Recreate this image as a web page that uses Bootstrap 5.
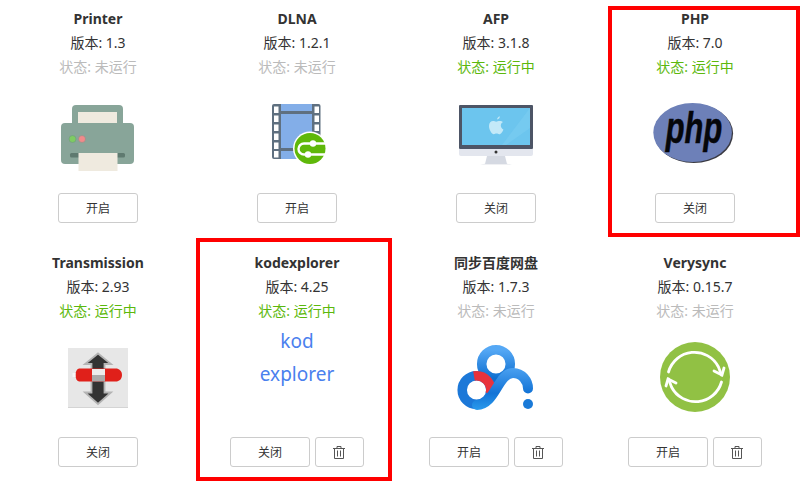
<!DOCTYPE html>
<html lang="zh-CN">
<head>
<meta charset="utf-8">
<title>插件</title>
<link href="https://cdn.jsdelivr.net/npm/bootstrap@5.3.0/dist/css/bootstrap.min.css" rel="stylesheet">
<style>
html,body{height:481px;overflow:hidden;background:#fff}
body{font-family:"Noto Sans","Noto Sans CJK SC",sans-serif;font-size:14px;color:#333}
.plugin-page{height:481px;padding-top:7px}
.plugin-grid{grid-template-columns:repeat(4,196px);column-gap:3px;grid-auto-rows:244px}
.plugin-item{line-height:24px}
.plugin-name{font-weight:700;font-size:14px;margin:0;line-height:24px}
.is-off{color:#bbb}
.is-on{color:#5cb80c}
.plugin-slot{height:114px;width:100%;padding-top:16px}
.plugin-slot svg{display:block;width:100px;height:80px}
.kod-slot{padding-top:2px}
.kod-logo{font-size:19px;line-height:33px;color:#4a80ee;width:100%}
.act-btn{width:80px;height:30px;padding:1px 0 0;font-size:12px;line-height:27px;border:1px solid #ccc;border-radius:3px;color:#333;background:#fff}
.del-btn{width:49px;height:30px;padding:0 1px 2px 0;border:1px solid #ccc;border-radius:3px;background:#fff;line-height:1}
.act-row{gap:5px}
.redbox{position:absolute;border:4px solid #f00;pointer-events:none}
.redbox-php{left:608px;top:6px;width:192px;height:231px}
.redbox-kod{left:196px;top:238px;width:196px;height:243px}
</style>
</head>
<body>
<div class="plugin-page position-relative">
<div class="plugin-grid d-grid">

<div class="plugin-item d-flex flex-column align-items-center text-center">
<h6 class="plugin-name">Printer</h6><div>版本: 1.3</div><div class="is-off">状态: 未运行</div>
<div class="plugin-slot d-flex justify-content-center">
<svg viewBox="48 95 100 80"><path d="M72 123v-14a4 4 0 0 1 4-4h43a4 4 0 0 1 4 4v14z" fill="#88a599"/><rect x="78" y="112" width="39" height="12" fill="#efeadf"/><rect x="61" y="123" width="73" height="41" rx="4" fill="#88a599"/><circle cx="72.500" cy="139" r="3.500" fill="#7ecb62" stroke="#6d9a80" stroke-width=".6"/><circle cx="82" cy="139" r="3.500" fill="#f28a8a" stroke="#8f8f88" stroke-width=".6"/><rect x="70" y="153" width="55" height="4.500" rx="1.500" fill="#5f7a70"/><rect x="78.500" y="153" width="39" height="18" fill="#efeadf"/></svg>
</div>
<button type="button" class="btn act-btn">开启</button>
</div>

<div class="plugin-item d-flex flex-column align-items-center text-center">
<h6 class="plugin-name">DLNA</h6><div>版本: 1.2.1</div><div class="is-off">状态: 未运行</div>
<div class="plugin-slot d-flex justify-content-center">
<svg viewBox="247 95 100 80"><rect x="272" y="104" width="48.500" height="55" rx="2" fill="#5f7080"/><rect x="281" y="104" width="31" height="55" fill="#83aee8"/><rect x="281" y="111" width="31" height="3" fill="#5f7080"/><rect x="281" y="148" width="31" height="3" fill="#5f7080"/><g fill="#fff"><rect x="274" y="106.500" width="4.500" height="6.500"/><rect x="274" y="115.500" width="4.500" height="6.500"/><rect x="274" y="124.500" width="4.500" height="6.500"/><rect x="274" y="133.500" width="4.500" height="6.500"/><rect x="274" y="142.500" width="4.500" height="6.500"/><rect x="274" y="151" width="4.500" height="6.500"/><rect x="314.500" y="106.500" width="4.500" height="6.500"/><rect x="314.500" y="115.500" width="4.500" height="6.500"/><rect x="314.500" y="124.500" width="4.500" height="6.500"/></g><circle cx="310" cy="148.500" r="17" fill="#fff"/><circle cx="310" cy="148.500" r="15.500" fill="#5fb80a"/><g fill="none" stroke="#fff" stroke-width="2.400"><path d="M325.500 143.500H304a5.500 5.500 0 0 0 0 11h21.500"/></g><circle cx="313" cy="143.500" r="3.200" fill="#fff"/><circle cx="308" cy="154.500" r="3.200" fill="#fff"/></svg>
</div>
<button type="button" class="btn act-btn">开启</button>
</div>

<div class="plugin-item d-flex flex-column align-items-center text-center">
<h6 class="plugin-name">AFP</h6><div>版本: 3.1.8</div><div class="is-on">状态: 运行中</div>
<div class="plugin-slot d-flex justify-content-center">
<svg viewBox="446 95 100 80"><path d="M480 164.500h32l-5-.8h-22z" fill="#dfe2e8"/><path d="M487 156h18l2 8h-22z" fill="#d5d9e2"/><path d="M459 149h74v5a2 2 0 0 1-2 2h-70a2 2 0 0 1-2-2z" fill="#e3e6ee"/><rect x="459" y="105" width="74" height="44" rx="1" fill="#4d5566"/><rect x="462" y="108" width="68" height="37" fill="#6cc5ee"/><path d="M530 108v20l-24 17h-4l28-37z" fill="#7bcdf1" opacity=".6"/><circle cx="496" cy="152" r="1.500" fill="#333"/><path d="M497 119.500c.2-1.500 1.200-2.800 2.800-3.200.1 1.700-1 3-2.800 3.200zM499.500 121c-1.300 0-2.300.7-3.300.7s-1.900-.7-3.100-.7c-2.100 0-4.100 1.800-4.100 5 0 3.900 2.800 8.300 4.800 8.300 1 0 1.500-.7 2.700-.7s1.600.7 2.700.7c1.900 0 3.700-3.200 4.200-4.900-3.300-1.400-3.400-5.900-.4-7.300-.7-.7-1.800-1.100-3.500-1.100z" fill="#c3e9f8"/></svg>
</div>
<button type="button" class="btn act-btn">关闭</button>
</div>

<div class="plugin-item d-flex flex-column align-items-center text-center">
<h6 class="plugin-name">PHP</h6><div>版本: 7.0</div><div class="is-on">状态: 运行中</div>
<div class="plugin-slot d-flex justify-content-center">
<svg viewBox="645 95 100 80"><ellipse cx="693.800" cy="133.600" rx="39.300" ry="29.500" fill="#3a3a42"/><ellipse cx="692.600" cy="132.600" rx="39.300" ry="29.500" fill="#6d80b8"/><text transform="translate(694 143) scale(.7 1)" text-anchor="middle" font-family="Liberation Sans" font-style="italic" font-weight="700" font-size="44" fill="#05060a" stroke="#05060a" stroke-width=".5">php</text></svg>
</div>
<button type="button" class="btn act-btn">关闭</button>
</div>

<div class="plugin-item d-flex flex-column align-items-center text-center">
<h6 class="plugin-name">Transmission</h6><div>版本: 2.93</div><div class="is-on">状态: 运行中</div>
<div class="plugin-slot d-flex justify-content-center">
<svg viewBox="48 339 100 80"><rect x="68" y="348" width="60" height="60" fill="#e7e7e7"/><rect x="68" y="407" width="60" height="1" fill="#d4d4d4"/><path d="M98 353.500l13 10.500h-6.500v8h-13v-8H85zM91.500 380h13v12.500H111L98 404l-13-11.500h6.500z" fill="#333" stroke="#b4b4b4" stroke-width="1.800" stroke-linejoin="miter"/><path d="M79 368.500H117q5 1.500 5 6.500t-5 6.500H79q-3.500-1-3.500-6.500t3.500-6.500z" fill="#e0201a"/><rect x="72.500" y="373" width="3" height="4" fill="#f6f6f6"/><rect x="92" y="369" width="13" height="6" fill="#ececec"/><rect x="92" y="375" width="13" height="6.500" fill="#aaa"/></svg>
</div>
<button type="button" class="btn act-btn">关闭</button>
</div>

<div class="plugin-item d-flex flex-column align-items-center text-center">
<h6 class="plugin-name">kodexplorer</h6><div>版本: 4.25</div><div class="is-on">状态: 运行中</div>
<div class="plugin-slot kod-slot d-flex justify-content-center">
<div class="kod-logo">kod<br>explorer</div>
</div>
<div class="act-row d-flex">
<button type="button" class="btn act-btn">关闭</button>
<button type="button" class="btn del-btn" aria-label="删除"><svg width="12" height="13" viewBox="0 0 12 13" fill="none" stroke="#555" stroke-width="1"><path d="M0 2.500h12M4 2.500V.5h4v2M1.500 2.500v10h9v-10M4.500 4.500v6M7.500 4.500v6"/></svg></button>
</div>
</div>

<div class="plugin-item d-flex flex-column align-items-center text-center">
<h6 class="plugin-name">同步百度网盘</h6><div>版本: 1.7.3</div><div class="is-off">状态: 未运行</div>
<div class="plugin-slot d-flex justify-content-center">
<svg viewBox="446 339 100 80"><defs><linearGradient id="bdb" x1="0" y1="0" x2="0" y2="1"><stop offset="0" stop-color="#55a8f5"/><stop offset="1" stop-color="#0e6fd0"/></linearGradient><linearGradient id="bdc" gradientUnits="userSpaceOnUse" x1="0" y1="368" x2="0" y2="410"><stop offset="0" stop-color="#4aa0f0"/><stop offset=".6" stop-color="#1273d6"/><stop offset="1" stop-color="#2a9aec"/></linearGradient></defs><circle cx="496" cy="364" r="14.300" fill="none" stroke="url(#bdb)" stroke-width="9.500"/><circle cx="476.500" cy="390" r="14.300" fill="none" stroke="#1c78d8" stroke-width="9.500"/><path d="M474 376A14.300 14.300 0 0 1 490.300 393.700" fill="none" stroke="#e8323c" stroke-width="9.500"/><path d="M477 405C495 405 498 373 513 373C522 373 528 381 528 388.500" fill="none" stroke="url(#bdc)" stroke-width="10" stroke-linecap="round"/><circle cx="528" cy="404" r="5" fill="#1a7ad8"/></svg>
</div>
<div class="act-row d-flex">
<button type="button" class="btn act-btn">开启</button>
<button type="button" class="btn del-btn" aria-label="删除"><svg width="12" height="13" viewBox="0 0 12 13" fill="none" stroke="#555" stroke-width="1"><path d="M0 2.500h12M4 2.500V.5h4v2M1.500 2.500v10h9v-10M4.500 4.500v6M7.500 4.500v6"/></svg></button>
</div>
</div>

<div class="plugin-item d-flex flex-column align-items-center text-center">
<h6 class="plugin-name">Verysync</h6><div>版本: 0.15.7</div><div class="is-off">状态: 未运行</div>
<div class="plugin-slot d-flex justify-content-center">
<svg viewBox="645 339 100 80"><circle cx="695" cy="377" r="35" fill="#91c144"/><g fill="none" stroke="#fff" stroke-width="2.800" stroke-linecap="round"><path d="M668.500 372a27 27 0 0 1 50 -5l3 8"/><path d="M721.500 382a27 27 0 0 1-50 5l-3-8"/><path d="M714 371l8 4 2-7"/><path d="M676 383l-8-4-2 7"/></g></svg>
</div>
<div class="act-row d-flex">
<button type="button" class="btn act-btn">开启</button>
<button type="button" class="btn del-btn" aria-label="删除"><svg width="12" height="13" viewBox="0 0 12 13" fill="none" stroke="#555" stroke-width="1"><path d="M0 2.500h12M4 2.500V.5h4v2M1.500 2.500v10h9v-10M4.500 4.500v6M7.500 4.500v6"/></svg></button>
</div>
</div>

</div>
<div class="redbox redbox-php"></div>
<div class="redbox redbox-kod"></div>
</div>
<script src="https://cdn.jsdelivr.net/npm/bootstrap@5.3.0/dist/js/bootstrap.bundle.min.js"></script>
</body>
</html>
